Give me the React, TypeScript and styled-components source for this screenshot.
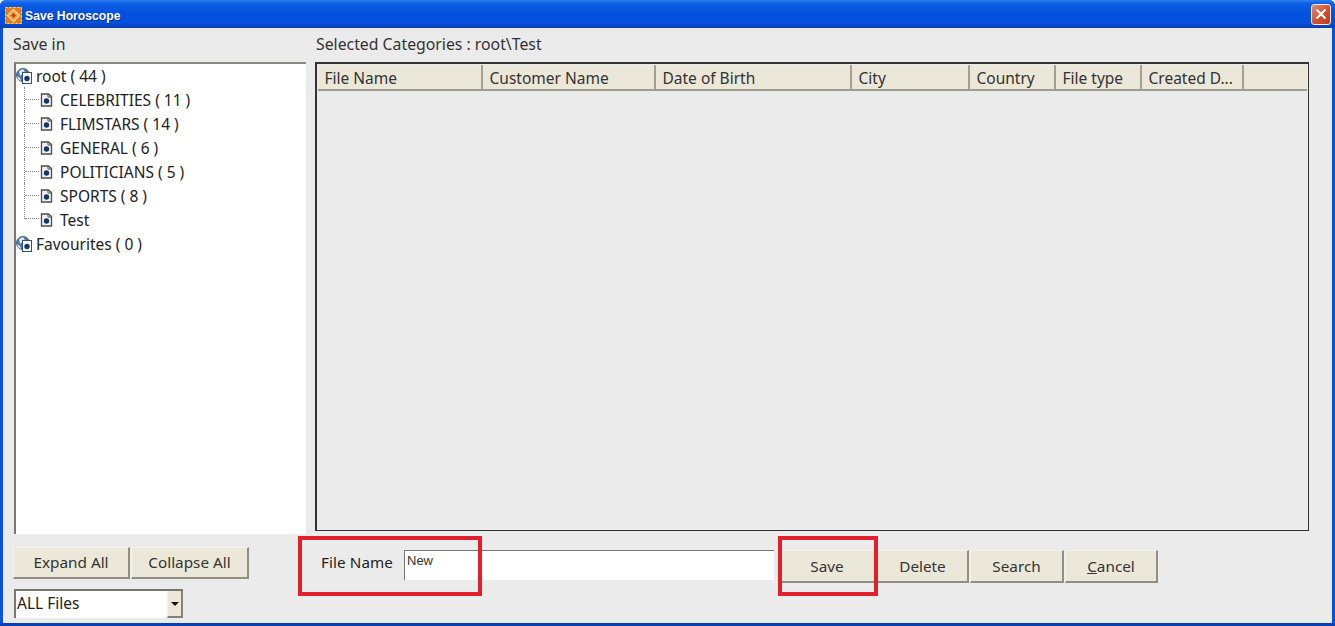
import React from "react";
import styled, { createGlobalStyle } from "styled-components";

const GlobalStyle = createGlobalStyle`
  html, body { margin: 0; padding: 0; background: #ebebeb; }
  body { font-family: "Noto Sans", Tahoma, sans-serif; color: #222; overflow: hidden; }
  * { box-sizing: border-box; }
`;

const Window = styled.div`
  position: relative;
  width: 1335px;
  height: 626px;
  display: flex;
  flex-direction: column;
  background: #0a52d8;
  border-radius: 6px 6px 0 0;
  overflow: hidden;
`;

const TitleBar = styled.div`
  height: 28px;
  flex: none;
  display: flex;
  align-items: center;
  padding: 3px 4px 0 5px;
  gap: 3px;
  background: linear-gradient(180deg, #2f7fee 0%, #0d5fe6 12%, #0250dc 50%, #0450df 80%, #0a3fb0 100%);
`;

const TitleText = styled.span`
  flex: 1;
  color: #fff;
  font-family: "Liberation Sans", Arial, sans-serif;
  font-size: 12.2px;
  font-weight: 700;
  text-shadow: 1px 1px 0 #0a2f90;
`;

const CloseButton = styled.div`
  width: 20px;
  height: 21px;
  margin-top: -3px;
  border: 1px solid #f2e6e0;
  border-radius: 3px;
  background: linear-gradient(135deg, #e88a6c 0%, #d2502c 55%, #b83c1c 100%);
  display: flex;
  align-items: center;
  justify-content: center;
`;

const Body = styled.div`
  flex: 1;
  margin: 0 3px;
  padding: 0 0 0 10px;
  background: #ebebeb;
  display: flex;
  flex-direction: column;
  min-height: 0;
`;

const BottomEdge = styled.div`
  height: 3px;
  flex: none;
  background: #0a3fb4;
`;

const Columns = styled.div`
  height: 506px;
  flex: none;
  display: grid;
  grid-template-columns: 293px 994px;
  column-gap: 9px;
`;

const Column = styled.div`
  display: flex;
  flex-direction: column;
  min-width: 0;
`;

const Caption = styled.div<{ $indent?: number }>`
  height: 34px;
  flex: none;
  padding-left: ${(p) => p.$indent ?? 0}px;
  padding-top: 6px;
  font-size: 15.8px;
  line-height: 20px;
  color: #333;
`;

const TreePanel = styled.div`
  height: 472px;
  margin-left: 1px;
  background: #fff;
  border-top: 2px solid #8a8a80;
  border-left: 2px solid #77776c;
  font-size: 15.5px;
`;

const TreeRow = styled.div<{ $child?: boolean }>`
  height: 24px;
  display: flex;
  align-items: center;
  padding-left: ${(p) => (p.$child ? 8 : 0)}px;
  padding-bottom: 1px;
  color: #222;
  white-space: nowrap;
`;

const Connector = styled.span<{ $last?: boolean }>`
  width: 16px;
  height: ${(p) => (p.$last ? 11 : 24)}px;
  margin-bottom: ${(p) => (p.$last ? 11 : 0)}px;
  margin-top: -1px;
  flex: none;
  display: flex;
  align-items: ${(p) => (p.$last ? "flex-end" : "center")};
  border-left: 1px dotted #888;
  &::after {
    content: "";
    width: 14px;
    border-top: 1px dotted #888;
  }
`;

const RowLabel = styled.span<{ $child?: boolean }>`
  margin-left: ${(p) => (p.$child ? 7 : 4)}px;
`;

const TablePanel = styled.div`
  height: 469px;
  background: #ebebeb;
  border: 2px solid #333;
  border-right-width: 1px;
  border-bottom-width: 1px;
  padding: 1px 1px 0 1px;
`;

const HeaderRow = styled.div`
  height: 26px;
  display: flex;
  background: #ebe8d9;
  border-bottom: 2px solid #9d9b8c;
`;

const HeaderCell = styled.div<{ $w?: number }>`
  width: ${(p) => (p.$w ? `${p.$w}px` : "auto")};
  flex: ${(p) => (p.$w ? "none" : 1)};
  padding-left: 6.5px;
  border-right: ${(p) => (p.$w ? "2px solid #a3a194" : "none")};
  font-size: 15.5px;
  line-height: 26px;
  color: #333;
  white-space: nowrap;
  overflow: hidden;
`;

const Footer = styled.div`
  flex: 1;
  display: grid;
  grid-template-columns: 286px 1fr;
  min-height: 0;
`;

const FooterLeft = styled.div`
  display: flex;
  flex-direction: column;
  padding-top: 13px;
  gap: 10px;
`;

const ButtonGroup = styled.div`
  display: flex;
  gap: 1px;
`;

const Button = styled.div<{ $w: number; $short?: boolean }>`
  width: ${(p) => p.$w}px;
  height: ${(p) => (p.$short ? 32 : 33)}px;
  padding-bottom: ${(p) => (p.$short ? 2 : 0)}px;
  flex: none;
  display: flex;
  align-items: center;
  justify-content: center;
  background: #ebe8d9;
  border-top: 1px solid #f6f4ea;
  border-left: 1px solid #f6f4ea;
  border-right: 2px solid #918f80;
  border-bottom: 2px solid #918f80;
  font-size: 15.3px;
  color: #333;
`;

const Combo = styled.div`
  width: 169px;
  height: 29px;
  margin-left: 1px;
  display: flex;
  align-items: center;
  justify-content: space-between;
  background: #fff;
  border-top: 2px solid #77776c;
  border-left: 2px solid #77776c;
  padding: 0 0 0 1px;
  font-size: 15.5px;
  line-height: 24px;
  color: #222;
`;

const ComboLabel = styled.span`
  margin-top: -3px;
`;

const ComboArrow = styled.div`
  width: 16px;
  height: 27px;
  display: flex;
  align-items: center;
  justify-content: center;
  background: #ebe8d9;
  border-right: 2px solid #858374;
  border-bottom: 2px solid #858374;
  border-left: 1px solid #f6f4ea;
  &::after {
    content: "";
    border: 4px solid transparent;
    border-top: 4px solid #111;
    border-bottom: 0;
  }
`;

const FooterRight = styled.div`
  display: flex;
  align-items: flex-start;
  padding-top: 16px;
`;

const FieldLabel = styled.label`
  width: 83px;
  flex: none;
  margin-left: 22px;
  margin-top: 1px;
  font-size: 15.2px;
  line-height: 22px;
  letter-spacing: 0.1px;
  color: #222;
`;

const TextField = styled.div`
  width: 370px;
  height: 30px;
  flex: none;
  background: #fff;
  border-top: 1px solid #77776c;
  border-left: 1px solid #77776c;
  padding-left: 2px;
  font-family: "Liberation Sans", Arial, sans-serif;
  font-size: 13px;
  line-height: 20px;
  color: #333;
`;

const ActionButtons = styled.div`
  margin-left: 5px;
  display: flex;
  gap: 1px;
`;

const Highlight = styled.div<{ $x: number; $w: number }>`
  position: absolute;
  left: ${(p) => p.$x}px;
  top: 536px;
  width: ${(p) => p.$w}px;
  height: 60px;
  border: 4px solid #e1202b;
  pointer-events: none;
`;

const Ul = styled.span`
  text-decoration: underline;
`;

const AppIcon = () => (
  <svg width="17" height="17" viewBox="0 0 17 17">
    <rect width="17" height="17" fill="#e8791c" />
    <rect x="0.5" y="0.5" width="16" height="16" fill="none" stroke="#f7e08a" strokeDasharray="2 2" />
    <path d="M8.5 2.5 L14.5 8.5 L8.5 14.5 L2.5 8.5 Z" fill="#f09a38" stroke="#fbd58c" strokeWidth="1.4" />
    <path d="M8.5 5.5 L11.5 8.5 L8.5 11.5 L5.5 8.5 Z" fill="#c8430c" stroke="#f6b860" strokeWidth="0.8" />
  </svg>
);

const CloseIcon = () => (
  <svg width="12" height="12" viewBox="0 0 12 12">
    <path d="M1.5 1.5 L10.5 10.5 M10.5 1.5 L1.5 10.5" stroke="#fff" strokeWidth="2.2" />
  </svg>
);

const GlobeIcon = () => (
  <svg width="16" height="16" viewBox="0 0 16 16">
    <circle cx="7" cy="7" r="6.5" fill="#4a76a8" stroke="#46607f" />
    <path d="M3 3 L7 1 L9 4 L4 8 Z M1 8 L4 10 L5 13 L2 11 Z" fill="#dfe7ee" />
    <rect x="6.5" y="4.5" width="9" height="11" fill="#fff" stroke="#34506f" />
    <circle cx="11" cy="10.5" r="2.7" fill="#16356c" />
  </svg>
);

const NodeIcon = () => (
  <svg width="13" height="14" viewBox="0 0 13 14">
    <path d="M1.5 1 H8.5 L11.5 3.5 V13 H1.5 Z" fill="#f4f4ee" stroke="#4a4c46" strokeWidth="1.3" />
    <path d="M8 1 V4 H12" fill="none" stroke="#4a4c46" />
    <circle cx="6.5" cy="8" r="2.7" fill="#16356c" />
  </svg>
);

const categories = ["CELEBRITIES ( 11 )", "FLIMSTARS ( 14 )", "GENERAL ( 6 )", "POLITICIANS ( 5 )", "SPORTS ( 8 )", "Test"];

const columns = [
  { name: "File Name", w: 165 },
  { name: "Customer Name", w: 173 },
  { name: "Date of Birth", w: 196 },
  { name: "City", w: 118 },
  { name: "Country", w: 86 },
  { name: "File type", w: 86 },
  { name: "Created D...", w: 102 },
  { name: "" },
];

export default function App() {
  return (
    <>
      <GlobalStyle />
      <Window>
        <TitleBar>
          <AppIcon />
          <TitleText>Save Horoscope</TitleText>
          <CloseButton>
            <CloseIcon />
          </CloseButton>
        </TitleBar>
        <Body>
          <Columns>
            <Column>
              <Caption>Save in</Caption>
              <TreePanel>
                <TreeRow>
                  <GlobeIcon />
                  <RowLabel>root ( 44 )</RowLabel>
                </TreeRow>
                {categories.map((c, i) => (
                  <TreeRow $child key={c}>
                    <Connector $last={i === categories.length - 1} />
                    <NodeIcon />
                    <RowLabel $child>{c}</RowLabel>
                  </TreeRow>
                ))}
                <TreeRow>
                  <GlobeIcon />
                  <RowLabel>Favourites ( 0 )</RowLabel>
                </TreeRow>
              </TreePanel>
            </Column>
            <Column>
              <Caption $indent={1}>Selected Categories : root\Test</Caption>
              <TablePanel>
                <HeaderRow>
                  {columns.map((c) => (
                    <HeaderCell $w={c.w} key={c.name}>
                      {c.name}
                    </HeaderCell>
                  ))}
                </HeaderRow>
              </TablePanel>
            </Column>
          </Columns>
          <Footer>
            <FooterLeft>
              <ButtonGroup>
                <Button $w={117} $short>Expand All</Button>
                <Button $w={118} $short>Collapse All</Button>
              </ButtonGroup>
              <Combo>
                <ComboLabel>ALL Files</ComboLabel>
                <ComboArrow />
              </Combo>
            </FooterLeft>
            <FooterRight>
              <FieldLabel>File Name</FieldLabel>
              <TextField>New</TextField>
              <ActionButtons>
                <Button $w={97}>Save</Button>
                <Button $w={92}>Delete</Button>
                <Button $w={94}>Search</Button>
                <Button $w={93}>
                  <span>
                    <Ul>C</Ul>ancel
                  </span>
                </Button>
              </ActionButtons>
            </FooterRight>
          </Footer>
        </Body>
        <BottomEdge />
        <Highlight $x={298} $w={184} />
        <Highlight $x={778} $w={100} />
      </Window>
    </>
  );
}
